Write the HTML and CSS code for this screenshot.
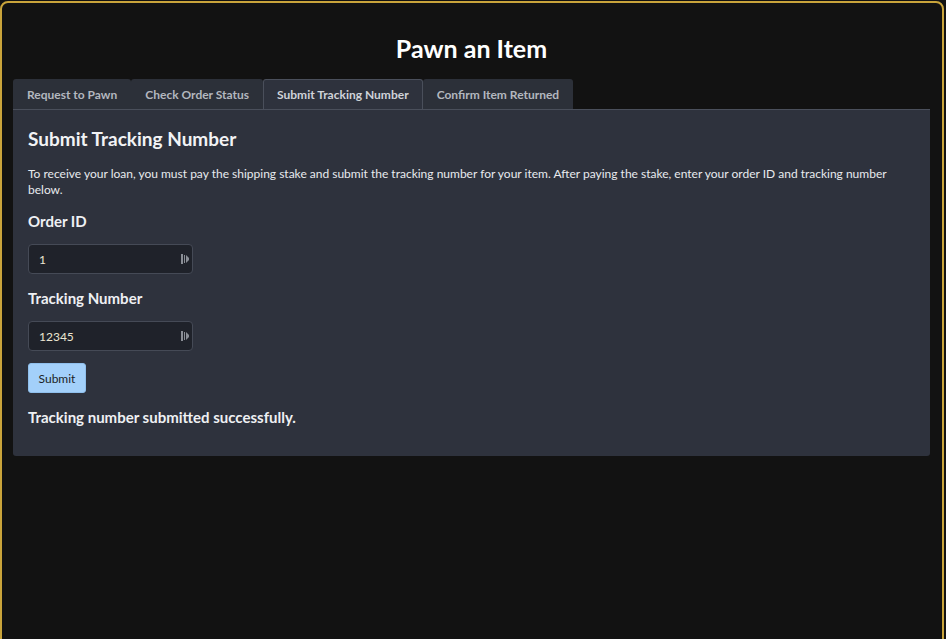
FILE: index.html
```html
<!DOCTYPE html>
<html>
<head>
<meta charset="utf-8">
<link rel="stylesheet" href="styles.css">
</head>
<body>
<div class="frame">
  <h1 class="title">Pawn an Item</h1>
  <div class="tabs">
    <div class="tab">Request to Pawn</div>
    <div class="tab">Check Order Status</div>
    <div class="tab active">Submit Tracking Number</div>
    <div class="tab">Confirm Item Returned</div>
  </div>
  <div class="panel">
    <h2 class="heading">Submit Tracking Number</h2>
    <p class="intro">To receive your loan, you must pay the shipping stake and submit the tracking number for your item. After paying the stake, enter your order ID and tracking number below.</p>
    <label class="label">Order ID</label>
    <div class="input"><span>1</span><svg class="spin" width="8" height="12" viewBox="0 0 8 12"><rect x="0" y="1" width="2" height="10" fill="#8a8e96"/><rect x="3" y="2" width="1" height="8" fill="#8a8e96"/><path d="M5 2 L8 5 L8 7 L5 10 Z" fill="#8a8e96"/></svg></div>
    <label class="label">Tracking Number</label>
    <div class="input"><span>12345</span><svg class="spin" width="8" height="12" viewBox="0 0 8 12"><rect x="0" y="1" width="2" height="10" fill="#8a8e96"/><rect x="3" y="2" width="1" height="8" fill="#8a8e96"/><path d="M5 2 L8 5 L8 7 L5 10 Z" fill="#8a8e96"/></svg></div>
    <button class="btn">Submit</button>
    <p class="msg">Tracking number submitted successfully.</p>
  </div>
</div>
</body>
</html>
```

FILE: styles.css
```css
html, body {
  margin: 0;
  padding: 0;
  background: #121212;
  font-family: Lato, "Noto Sans", sans-serif;
  color: #e8eaee;
}
body {
  height: 639px;
  overflow: hidden;
}
.frame {
  box-sizing: border-box;
  width: 944px;
  height: 660px;
  margin-top: 1px;
  border: 2px solid #c9a43b;
  border-radius: 8px;
  background: #121212;
  padding: 0 12px 0 11px;
  display: flex;
  flex-direction: column;
}
.title {
  margin: 0;
  padding-top: 30px;
  height: 46px;
  text-align: center;
  font-size: 25px;
  font-weight: 700;
  line-height: 30px;
  color: #ffffff;
}
.tabs {
  display: flex;
  height: 31px;
}
.tab {
  box-sizing: border-box;
  height: 31px;
  padding: 0 14px;
  display: flex;
  align-items: center;
  font-size: 12px;
  font-weight: 700;
  color: #b3b7bf;
  background: #2c3039;
  border-radius: 3px 3px 0 0;
  border-bottom: 1px solid #4a4f5b;
}
.tab.active {
  background: #2e323d;
  color: #d0d3d9;
  border: 1px solid #4a4f5b;
  border-bottom: 1px solid #2e323d;
  padding: 0 13px;
}
.panel {
  background: #2e323d;
  border-top: 1px solid #4a4f5b;
  margin-top: -1px;
  padding: 15px 15px 29px;
  border-radius: 0 0 3px 3px;
}
.heading {
  margin: 0;
  font-size: 19px;
  font-weight: 700;
  line-height: 28px;
  color: #f2f3f5;
}
.intro {
  margin: 13px 0 0;
  font-size: 12px;
  line-height: 16px;
  color: #e8eaee;
}
.label {
  display: block;
  margin-top: 13px;
  font-size: 15px;
  font-weight: 700;
  line-height: 20px;
  color: #eef0f3;
}
.input {
  box-sizing: border-box;
  width: 165px;
  height: 30px;
  margin-top: 13px;
  background: #1f222a;
  border: 1px solid #454a56;
  border-radius: 4px;
  display: flex;
  align-items: center;
  justify-content: space-between;
  padding: 0 3px 0 10px;
  font-size: 12px;
  color: #ece6d2;
}
.input + .label { margin-top: 14px; }
.btn {
  display: block;
  margin-top: 12px;
  height: 30px;
  width: 58px;
  background: #a3d0fa;
  border: 1px solid #8fbfec;
  border-radius: 3px;
  font-family: Lato, "Noto Sans", sans-serif;
  font-size: 12px;
  color: #1c1f26;
  padding: 0;
}
.msg {
  margin: 14px 0 0;
  font-size: 15px;
  font-weight: 700;
  line-height: 20px;
  color: #eef0f3;
}
```
